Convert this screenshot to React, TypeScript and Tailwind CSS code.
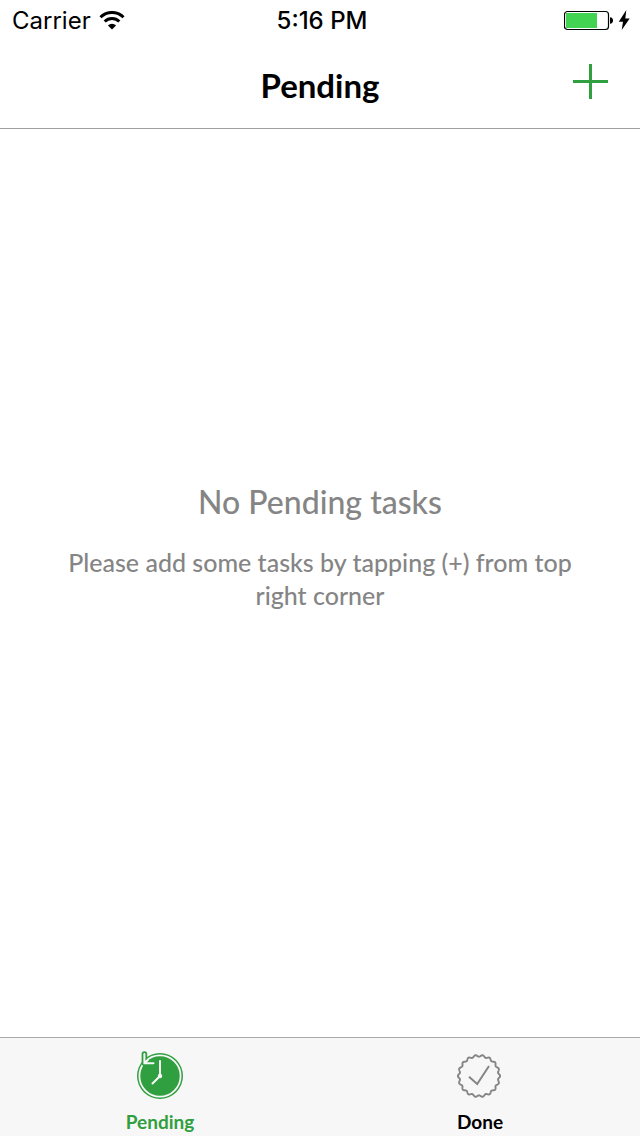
import type { ReactNode } from "react";

function scallopPath(cx: number, cy: number, radius: number, depth: number, lobes: number) {
  const steps = lobes * 16;
  const points: string[] = [];
  for (let i = 0; i < steps; i++) {
    const angle = (i / steps) * Math.PI * 2;
    const r = radius + depth * Math.cos(lobes * angle);
    points.push(`${(cx + r * Math.cos(angle)).toFixed(2)} ${(cy + r * Math.sin(angle)).toFixed(2)}`);
  }
  return `M${points.join("L")}Z`;
}

function WifiIcon() {
  return (
    <svg width="26" height="20" viewBox="0 0 26 20" fill="none" stroke="#000" aria-hidden="true">
      <path d="M1.5 6.2A16.3 16.3 0 0 1 24.5 6.2" strokeWidth="3" />
      <path d="M5.7 10.5A10.4 10.4 0 0 1 20.3 10.5" strokeWidth="3" />
      <path d="M13 18.6L8.9 14.5A5.8 5.8 0 0 1 17.1 14.5Z" fill="#000" stroke="none" />
    </svg>
  );
}

function BatteryIcon() {
  return (
    <svg width="68" height="22" viewBox="0 0 68 22" aria-hidden="true">
      <rect x="0.5" y="1.5" width="44" height="18" rx="3" fill="#fff" stroke="#000" strokeWidth="1.2" />
      <rect x="2" y="3" width="31" height="15" fill="#42d352" />
      <path d="M46 7.2C48 7.2 49 8.8 49 10.5S48 13.8 46 13.8Z" fill="#000" />
      <path d="M62.3 0L54.8 11.7H59L57.7 20L65.7 8.5H61.3Z" fill="#000" />
    </svg>
  );
}

function ClockIcon() {
  return (
    <svg width="50" height="50" viewBox="0 0 50 50" fill="none" aria-hidden="true">
      <circle cx="25" cy="26" r="23" fill="#309f40" />
      <circle cx="25" cy="26" r="20.6" stroke="#f7f7f7" strokeWidth="1.8" />
      <path d="M9.4 4V13.3H18.5" stroke="#309f40" strokeWidth="5.6" strokeLinecap="round" strokeLinejoin="round" />
      <path d="M9.4 4V13.3H18.5M9.4 13.3L13 9.7" stroke="#f7f7f7" strokeWidth="2" strokeLinecap="round" />
      <path d="M25 11V26L17.5 33.5" stroke="#f7f7f7" strokeWidth="2" strokeLinecap="round" />
      <circle cx="25" cy="26" r="2.2" fill="#f7f7f7" />
    </svg>
  );
}

function BadgeIcon() {
  return (
    <svg width="50" height="50" viewBox="0 0 50 50" fill="none" stroke="#858585" aria-hidden="true">
      <path d={scallopPath(24, 26, 20.2, 0.9, 18)} strokeWidth="1.9" />
      <path d="M14 26.8L22.2 34L34 16" strokeWidth="2" />
    </svg>
  );
}

function Tab({ label, color, children }: { label: string; color: string; children: ReactNode }) {
  return (
    <button type="button" className={`flex flex-1 flex-col items-center gap-2 pt-3 ${color}`}>
      {children}
      <span className="text-[19px] leading-7 font-bold">{label}</span>
    </button>
  );
}

export default function App() {
  return (
    <div className="flex min-h-screen flex-col bg-white font-[Lato,sans-serif] text-black">
      <header className="border-b border-[#a1a1a1]">
        <div className="grid h-[42px] grid-cols-3 items-center pr-2 pl-3 font-[Inter,sans-serif] text-2xl">
          <div className="flex items-center gap-2">
            <span>Carrier</span>
            <WifiIcon />
          </div>
          <time className="text-center font-medium">5:16 PM</time>
          <div className="flex justify-end">
            <BatteryIcon />
          </div>
        </div>
        <div className="grid h-[86px] grid-cols-3 items-center px-8">
          <h1 className="col-start-2 text-center text-[33px] leading-10 font-bold">Pending</h1>
          <button type="button" aria-label="Add task" className="justify-self-end pb-2">
            <svg width="35" height="35" viewBox="0 0 35 35" stroke="#309f40" strokeWidth="3" aria-hidden="true">
              <path d="M0 17.5H35M17.5 0V35" />
            </svg>
          </button>
        </div>
      </header>
      <main className="flex flex-1 flex-col items-center justify-center gap-6 px-14 pb-[72px] text-center text-[#858585]">
        <h2 className="text-[32px] leading-10 font-medium">No Pending tasks</h2>
        <p className="text-[25px] leading-[33px] font-medium">
          Please add some tasks by tapping (+) from top right corner
        </p>
      </main>
      <nav className="flex border-t border-[#a9a9a9] bg-[#f7f7f7]">
        <Tab label="Pending" color="text-[#309f40]">
          <ClockIcon />
        </Tab>
        <Tab label="Done" color="text-black">
          <BadgeIcon />
        </Tab>
      </nav>
    </div>
  );
}
